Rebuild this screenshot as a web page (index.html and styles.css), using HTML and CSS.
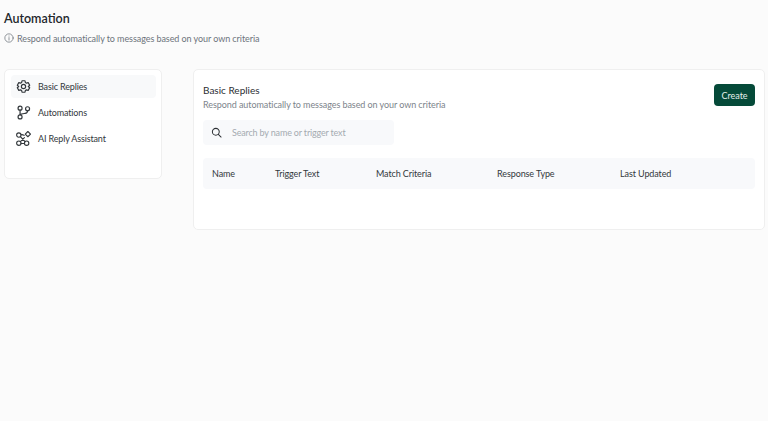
FILE: index.html
```html
<!DOCTYPE html>
<html lang="en">
<head>
    <meta charset="UTF-8">
    <meta name="viewport" content="width=device-width, initial-scale=1.0">
    <title>Automation</title>
    <link rel="stylesheet" href="styles.css">
</head>
<body>
    <div class="page">
        <h1 class="pageTitle">Automation</h1>
        <div class="pageHint">
            <svg class="hintIcon" viewBox="0 0 24 24" fill="none" stroke="currentColor" stroke-width="1.8" stroke-linecap="round">
                <circle cx="12" cy="12" r="10"/>
                <path d="M12 11v6M12 7.2v.3"/>
            </svg>
            <span>Respond automatically to messages based on your own criteria</span>
        </div>

        <div class="columns">
            <div class="sideCard">
                <div class="sideItem active">
                    <svg class="sideIcon" viewBox="0 0 24 24" fill="none" stroke="currentColor" stroke-width="1.9" stroke-linecap="round" stroke-linejoin="round">
                        <path d="M9.6 2.8h4.800l.6 2.900 1.700 1 2.800-.9 2.400 4.200-2.200 2 2.200 2-2.400 4.200-2.800-.9-1.700 1-.6 2.900H9.600l-.6-2.900-1.700-1-2.800.9-2.400-4.200 2.200-2-2.200-2 2.400-4.200 2.800.9 1.700-1z"/>
                        <circle cx="12" cy="12" r="3.400"/>
                    </svg>
                    <span>Basic Replies</span>
                </div>
                <div class="sideItem">
                    <svg class="sideIcon" viewBox="0 0 24 24" fill="none" stroke="currentColor" stroke-width="1.9" stroke-linecap="round" stroke-linejoin="round">
                        <circle cx="6.500" cy="5" r="3.200"/>
                        <circle cx="6.500" cy="19" r="3.200"/>
                        <circle cx="18.500" cy="6" r="3.200"/>
                        <path d="M6.500 8.200v7.600M18.500 9.200c0 2.800-1.500 4-4 4.300-3 .3-6.500.3-8 2.300"/>
                    </svg>
                    <span>Automations</span>
                </div>
                <div class="sideItem">
                    <svg class="sideIcon" viewBox="0 0 24 24" fill="none" stroke="currentColor" stroke-width="1.800" stroke-linecap="round" stroke-linejoin="round">
                        <circle cx="4.500" cy="6.500" r="3.500"/>
                        <circle cx="4.500" cy="19.500" r="3.500"/>
                        <circle cx="17" cy="19.500" r="3.500"/>
                        <path d="M7 9l7.500 8M7 17l6.500-6.500M8 6c2-.5 3.500 0 5 1M8 20h5.500"/>
                        <path d="M19 .8L23.200 5 19 9.200 14.800 5z"/>
                    </svg>
                    <span>AI Reply Assistant</span>
                </div>
            </div>

            <div class="mainCard">
                <div class="cardHeader">
                    <div>
                        <div class="cardTitle">Basic Replies</div>
                        <div class="cardSub">Respond automatically to messages based on your own criteria</div>
                    </div>
                    <button class="createBtn">Create</button>
                </div>
                <div class="searchBox">
                    <svg class="searchIcon" viewBox="0 0 24 24" fill="none" stroke="currentColor" stroke-width="2.200" stroke-linecap="round">
                        <circle cx="10.500" cy="10.500" r="7.500"/>
                        <path d="M16 16l6 6"/>
                    </svg>
                    <span>Search by name or trigger text</span>
                </div>
                <div class="tableHead">
                    <div class="colName">Name</div>
                    <div class="colTrigger">Trigger Text</div>
                    <div class="colMatch">Match Criteria</div>
                    <div class="colType">Response Type</div>
                    <div class="colDate">Last Updated</div>
                </div>
            </div>
        </div>
    </div>
</body>
</html>
```

FILE: styles.css
```css
body {
    margin: 0;
    background-color: #fbfbfb;
    font-family: Lato, "Noto Sans", sans-serif;
    color: #2b2f33;
}
.page {
    padding: 11px 3px 0 4px;
}
.pageTitle {
    margin: 0;
    font-size: 12.5px;
    line-height: 15px;
    font-weight: 600;
    color: #23272b;
}
.pageHint {
    display: flex;
    align-items: center;
    gap: 3px;
    margin-top: 5px;
    height: 14px;
    font-size: 9px;
    letter-spacing: -0.07px;
    color: #6d747b;
}
.hintIcon {
    width: 10px;
    height: 10px;
}
.columns {
    display: flex;
    align-items: flex-start;
    gap: 31px;
    margin-top: 24px;
}
.sideCard {
    box-sizing: border-box;
    width: 158px;
    height: 110px;
    flex-shrink: 0;
    padding: 5px 5px 0 6px;
    background-color: #fff;
    border: 1px solid #efefef;
    border-radius: 5px;
}
.sideItem {
    display: flex;
    align-items: center;
    gap: 7px;
    height: 23px;
    margin-bottom: 3px;
    padding-left: 5px;
    font-size: 9px;
    letter-spacing: -0.15px;
    color: #33383c;
    border-radius: 4px;
}
.sideItem.active {
    background-color: #f8f9fa;
}
.sideIcon {
    width: 15px;
    height: 15px;
}
.mainCard {
    box-sizing: border-box;
    flex: 1;
    height: 161px;
    padding: 13px 9px 0 9px;
    background-color: #fff;
    border: 1px solid #efefef;
    border-radius: 5px;
}
.cardHeader {
    display: flex;
    justify-content: space-between;
    align-items: flex-start;
}
.cardTitle {
    font-size: 10px;
    line-height: 15px;
    color: #2b2f33;
}
.cardSub {
    font-size: 9px;
    line-height: 14px;
    letter-spacing: -0.07px;
    color: #7d848b;
}
.createBtn {
    width: 41px;
    height: 22px;
    margin-top: 1px;
    padding: 0;
    border: none;
    border-radius: 4px;
    background-color: #054a39;
    color: #e4efeb;
    font-family: inherit;
    font-size: 9px;
}
.searchBox {
    display: flex;
    align-items: center;
    gap: 10px;
    width: 191px;
    height: 25px;
    margin-top: 8px;
    padding-left: 8px;
    box-sizing: border-box;
    background-color: #f8f9fb;
    border-radius: 4px;
    font-size: 9px;
    letter-spacing: -0.17px;
    color: #a5abb1;
}
.searchIcon {
    width: 11px;
    height: 11px;
    color: #2b2f33;
}
.tableHead {
    display: flex;
    align-items: center;
    height: 31px;
    margin-top: 13px;
    padding-left: 9px;
    background-color: #f8f9fb;
    border-radius: 4px;
    font-size: 9px;
    letter-spacing: -0.1px;
    color: #33383c;
}
.colName { width: 63px; }
.colTrigger { width: 101px; }
.colMatch { width: 121px; }
.colType { width: 123px; }
```
